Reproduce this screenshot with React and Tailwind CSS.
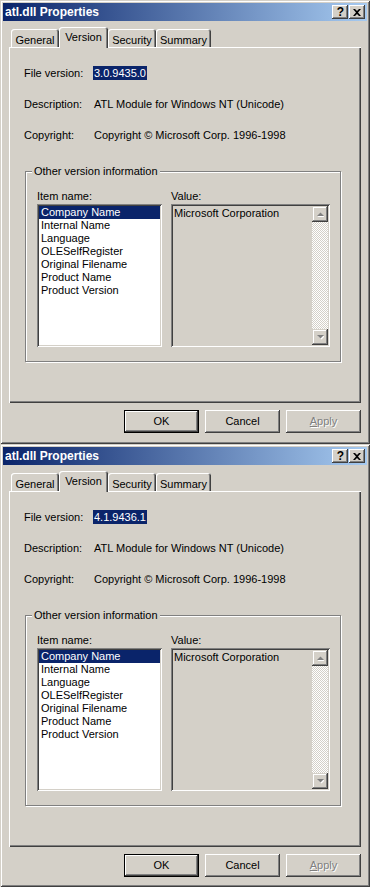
import React from "react";

const font = { fontFamily: '"Liberation Sans", Arial, sans-serif' };

function Arrow({ up }) {
  return (
    <svg width="7" height="5" viewBox="0 0 7 5" className="block">
      {up ? (
        <>
          <polygon points="4.5,1.5 8,5 1,5" fill="#fff" transform="translate(-0.5,0)" />
          <polygon points="3.5,0.5 7,4 0,4" fill="#808080" />
        </>
      ) : (
        <>
          <polygon points="1,1 8,1 4.5,4.5" fill="#fff" />
          <polygon points="0,0 7,0 3.5,3.5" fill="#808080" />
        </>
      )}
    </svg>
  );
}

function TitleButton({ children }) {
  return (
    <div className="w-[16px] h-[14px] bg-[#d4d0c8] shadow-[inset_-1px_-1px_#404040,inset_1px_1px_#fff,inset_-2px_-2px_#808080] flex items-center justify-center">
      {children}
    </div>
  );
}

function Tab({ label, selected, width }) {
  if (selected) {
    return (
      <div
        className="relative z-10 h-[21px] -mb-[1px] bg-[#d4d0c8] rounded-t-[3px] shadow-[inset_1px_1px_#fff,inset_-1px_0_#404040,inset_-2px_0_#808080] flex justify-center pt-[4px] text-[11px] leading-[13px] text-black"
        style={{ width }}
      >
        {label}
      </div>
    );
  }
  return (
    <div
      className="h-[18px] bg-[#d4d0c8] rounded-t-[3px] shadow-[inset_1px_1px_#fff,inset_-1px_0_#404040,inset_-2px_0_#808080] flex justify-center pt-[5px] text-[11px] leading-[13px] text-black"
      style={{ width }}
    >
      {label}
    </div>
  );
}

function Button({ children, isDefault, disabled }) {
  const base =
    "w-[75px] h-[23px] flex items-center justify-center text-[11px] bg-[#d4d0c8]";
  if (isDefault) {
    return (
      <div className={base + " shadow-[inset_0_0_0_1px_#000,inset_-2px_-2px_#404040,inset_2px_2px_#fff,inset_-3px_-3px_#808080]"}>
        <span className="text-black">{children}</span>
      </div>
    );
  }
  return (
    <div className={base + " shadow-[inset_-1px_-1px_#404040,inset_1px_1px_#fff,inset_-2px_-2px_#808080]"}>
      {disabled ? (
        <span className="text-[#808080] [text-shadow:1px_1px_#fff]">{children}</span>
      ) : (
        <span className="text-black">{children}</span>
      )}
    </div>
  );
}

const items = [
  "Company Name",
  "Internal Name",
  "Language",
  "OLESelfRegister",
  "Original Filename",
  "Product Name",
  "Product Version",
];

function Dialog({ version, height }) {
  return (
    <div
      className="w-[370px] bg-[#d4d0c8] shadow-[inset_1px_1px_#d4d0c8,inset_-1px_-1px_#404040,inset_2px_2px_#fff,inset_-2px_-2px_#808080] p-[3px] flex flex-col"
      style={{ height }}
    >
      {/* Title bar */}
      <div className="h-[18px] bg-[linear-gradient(to_right,#0a246a,#a6caf0)] flex items-center justify-between pl-[2px] pr-[2px]">
        <span className="text-white font-bold text-[12px] leading-[14px]">atl.dll Properties</span>
        <div className="flex gap-[1px]">
          <TitleButton>
            <span className="text-black font-bold text-[12px] leading-[12px] pl-[1px]">?</span>
          </TitleButton>
          <TitleButton>
            <svg width="8" height="7" viewBox="0 0 8 7">
              <path d="M0 0h2l2 2 2-2h2L5 3.5 8 7H6L4 5 2 7H0l3-3.5z" fill="#000" />
            </svg>
          </TitleButton>
        </div>
      </div>

      <div className="px-[6px] flex flex-col">
        {/* Tabs */}
        <div className="mt-[6px] pl-[2px] flex items-end h-[20px]">
          <Tab label="General" width={48} />
          <Tab label="Version" width={49} selected />
          <Tab label="Security" width={48} />
          <Tab label="Summary" width={55} />
        </div>

        {/* Panel */}
        <div className="h-[356px] shadow-[inset_1px_1px_#fff,inset_-1px_-1px_#404040,inset_-2px_-2px_#808080] flex flex-col pt-[19px] text-[11px] leading-[14px] text-black">
          <div className="flex h-[14px] pl-[15px]">
            <span className="w-[70px]">File version:</span>
            <span className="bg-[#0a246a] text-white px-[1px] -ml-[1px]">{version}</span>
          </div>
          <div className="flex h-[14px] pl-[15px] mt-[17px]">
            <span className="w-[70px]">Description:</span>
            <span>ATL Module for Windows NT (Unicode)</span>
          </div>
          <div className="flex h-[14px] pl-[15px] mt-[17px]">
            <span className="w-[70px]">Copyright:</span>
            <span>Copyright © Microsoft Corp. 1996-1998</span>
          </div>

          {/* Group box */}
          <div className="relative ml-[16px] mt-[29px] w-[316px] h-[191px] border border-[#808080] shadow-[1px_1px_#fff,inset_1px_1px_#fff] flex flex-col">
            <span className="absolute left-[6px] -top-[8px] bg-[#d4d0c8] px-[2px] leading-[14px]">
              Other version information
            </span>
            <div className="flex mt-[17px] h-[14px] pl-[11px]">
              <span className="w-[134px]">Item name:</span>
              <span>Value:</span>
            </div>
            <div className="flex mt-[1px] pl-[11px] gap-[9px]">
              <div className="w-[125px] h-[143px] bg-white shadow-[inset_1px_1px_#808080,inset_-1px_-1px_#fff,inset_2px_2px_#404040,inset_-2px_-2px_#d4d0c8] p-[2px] flex flex-col">
                {items.map((it, i) => (
                  <div
                    key={it}
                    className={
                      "h-[13px] leading-[13px] pl-[2px] " +
                      (i === 0 ? "bg-[#0a246a] text-white" : "text-black")
                    }
                  >
                    {it}
                  </div>
                ))}
              </div>
              <div className="w-[159px] h-[143px] bg-[#d4d0c8] shadow-[inset_1px_1px_#808080,inset_-1px_-1px_#fff,inset_2px_2px_#404040,inset_-2px_-2px_#d4d0c8] p-[2px] flex">
                <div className="flex-1 pl-[1px] pt-[1px] leading-[13px]">Microsoft Corporation</div>
                <div className="w-[16px] flex flex-col">
                  <div className="h-[16px] bg-[#d4d0c8] shadow-[inset_-1px_-1px_#404040,inset_1px_1px_#d4d0c8,inset_-2px_-2px_#808080,inset_2px_2px_#fff] flex items-center justify-center">
                    <Arrow up />
                  </div>
                  <div className="flex-1 bg-[repeating-conic-gradient(#fff_0_25%,#d4d0c8_0_50%)] bg-[length:2px_2px]" />
                  <div className="h-[16px] bg-[#d4d0c8] shadow-[inset_-1px_-1px_#404040,inset_1px_1px_#d4d0c8,inset_-2px_-2px_#808080,inset_2px_2px_#fff] flex items-center justify-center">
                    <Arrow />
                  </div>
                </div>
              </div>
            </div>
          </div>
        </div>

        {/* Buttons */}
        <div className="mt-[7px] flex justify-end gap-[6px]">
          <Button isDefault>OK</Button>
          <Button>Cancel</Button>
          <Button disabled>
            <span className="underline">A</span>pply
          </Button>
        </div>
      </div>
    </div>
  );
}

export default function App() {
  return (
    <div className="w-[370px] h-[887px] bg-[#d4d0c8]" style={font}>
      <Dialog version="3.0.9435.0" height={444} />
      <Dialog version="4.1.9436.1" height={443} />
    </div>
  );
}
